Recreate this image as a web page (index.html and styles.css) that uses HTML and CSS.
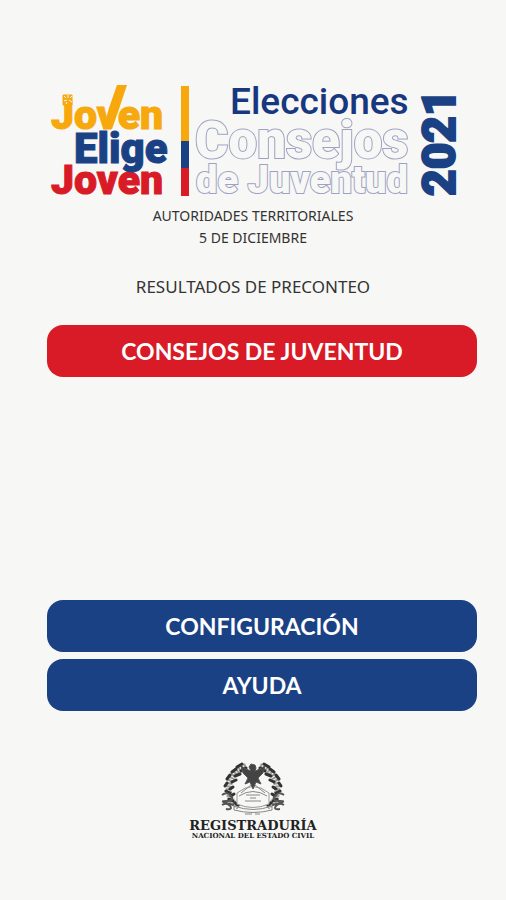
FILE: index.html
```
<!DOCTYPE html>
<html lang="es">
<head>
  <meta charset="UTF-8">
  <meta name="viewport" content="width=device-width, initial-scale=1.0">
  <title>Consejos de Juventud 2021</title>
  <link rel="stylesheet" href="styles.css">
</head>
<body>
  <header class="header">
    <svg class="logo" viewBox="0 0 408 114" role="img" aria-label="Joven Elige Joven, Elecciones Consejos de Juventud 2021">
      <!-- Slogan -->
      <g class="slogan">
        <text class="yellow" x="2" y="45">Joven</text>
        <path class="check" d="M54 45L60 24L68 1H78L69 28L63 45Z"/>
        <path class="yellow" d="M14 11h9v10h-9z"/>
        <path class="sparkle" d="M15 12l2 2M19 11v3M23 12l-2 2M15 17l3-1M20 16l3 2M18 18l-1 2"/>
        <text class="red" x="2" y="110">Joven</text>
        <text class="blue large" x="25" y="79">Elige</text>
      </g>
      <!-- Flag bar -->
      <rect class="yellow" x="132" y="2" width="8" height="55"/>
      <rect class="blue" x="132" y="57" width="8" height="27"/>
      <rect class="red" x="132" y="84" width="8" height="28"/>
      <!-- Event name -->
      <text class="outline small" x="147" y="109">de Juventud</text>
      <text class="outline" x="146" y="74">Consejos</text>
      <text class="event" x="181" y="30">Elecciones</text>
      <text class="year" transform="translate(406 112) rotate(-90)">2021</text>
    </svg>
    <p class="subtitle">AUTORIDADES TERRITORIALES</p>
    <p class="subtitle">5 DE DICIEMBRE</p>
    <h1 class="title">RESULTADOS DE PRECONTEO</h1>
  </header>

  <main class="menu">
    <button type="button" class="btn btn-red">CONSEJOS DE JUVENTUD</button>
    <div class="options">
      <button type="button" class="btn">CONFIGURACIÓN</button>
      <button type="button" class="btn">AYUDA</button>
    </div>
  </main>

  <footer class="footer">
    <svg class="emblem" viewBox="0 0 66 54" aria-hidden="true">
      <g class="wreath">
        <path d="M26 4C13 8 8 20 9 30s5 11 10 15"/>
        <path d="M40 4c13 4 18 16 17 26s-5 11-10 15"/>
      </g>
      <g class="leaves">
        <path d="M22 2l-5 3M26 6l-5 3M16 7l-4 3M20 12l-5 2M10 13l-3 4M16 18l-4 2M7 21l-2 3M13 25l-3 2M6 29l4 2M14 32l-3 2M9 37l4 2M15 41l3 2"/>
        <path d="M44 2l5 3M40 6l5 3M50 7l4 3M46 12l5 2M56 13l3 4M50 18l4 2M59 21l2 3M53 25l3 2M60 29l-4 2M52 32l3 2M57 37l-4 2M51 41l-3 2"/>
      </g>
      <path class="ribbon" d="M2 33q5-4 9 1t-5 5 8 4M64 33q-5-4-9 1t5 5-8 4M2 43q5-3 8 1t-4 3M64 43q-5-3-8 1t4 3"/>
      <path class="shield" d="M17 31q16-13 32 0v11q-16 7-32 0z"/>
      <path class="thin" d="M19 34q14-9 28 0M26 33h14M30 36h6M25 39h16M14 44q19 7 38 0v4q-19 5-38 0zM25 52h7M35 52h5"/>
      <path class="bird" d="M31 2l4 1 1 3-1 3 5-2 5-3-2 7-5 5 3 6-5-2-3 7-3-7-5 2 3-6-5-5-2-7 5 3 5 2-2-4z"/>
      <path class="thin" d="M31 23l-10 8M35 23l10 8"/>
    </svg>
    <p class="agency">REGISTRADURÍA</p>
    <p class="agency-sub">NACIONAL DEL ESTADO CIVIL</p>
  </footer>
</body>
</html>
```
FILE: styles.css
```
* {
  box-sizing: border-box;
}
body {
  display: flex;
  flex-direction: column;
  min-height: 100vh;
  margin: 0;
  background-color: #f7f7f5;
  color: #333;
  font-family: "Noto Sans", sans-serif;
}
p, h1 {
  margin: 0;
}
.header {
  display: flex;
  flex-direction: column;
  align-items: center;
  padding-top: 84px;
  text-align: center;
}
.logo {
  width: 408px;
  max-width: 100%;
  margin-bottom: 7px;
  overflow: visible;
  font-family: Roboto, sans-serif;
}
.slogan {
  font-size: 41px;
  font-weight: 900;
}
.slogan text {
  stroke-width: 1px;
}
.large {
  font-size: 42px;
}
.yellow {
  fill: #f7a80d;
}
.blue {
  fill: #1b4185;
}
.red {
  fill: #d81b26;
}
.slogan .yellow {
  stroke: #f7a80d;
}
.slogan .blue {
  stroke: #1b4185;
}
.slogan .red {
  stroke: #d81b26;
}
.check {
  fill: #f7a80d;
}
.sparkle {
  fill: none;
  stroke: #f7f7f5;
}
.outline {
  fill: #f7f7f5;
  stroke: #9da2c2;
  stroke-width: 2px;
  paint-order: stroke;
  font-size: 51px;
  font-weight: 900;
}
.small {
  font-size: 38px;
}
.event {
  fill: #17377f;
  font-size: 37px;
  font-weight: 500;
}
.year {
  fill: #1b4185;
  stroke: #1b4185;
  stroke-width: 2px;
  font-size: 46px;
  font-weight: 900;
}
.subtitle {
  font-size: 14px;
  line-height: 22px;
}
.title {
  margin-top: 26px;
  font-size: 17px;
  font-weight: 400;
  line-height: 24px;
}
.menu {
  display: flex;
  flex: 1;
  flex-direction: column;
  justify-content: space-between;
  padding: 26px 29px 0 47px;
}
.options {
  display: flex;
  flex-direction: column;
  gap: 7px;
}
.btn {
  width: 100%;
  height: 52px;
  border: none;
  border-radius: 16px;
  background-color: #1b4185;
  color: white;
  font-family: Lato, sans-serif;
  font-size: 23px;
  font-weight: 700;
  cursor: pointer;
}
.btn-red {
  background-color: #d81b26;
}
.footer {
  display: flex;
  flex-direction: column;
  align-items: center;
  padding: 51px 0 60px;
  color: #222;
  font-family: "DejaVu Serif", serif;
  font-weight: bold;
}
.emblem {
  width: 66px;
  margin-bottom: 3px;
}
.emblem path {
  fill: none;
  stroke: #555;
}
.emblem .wreath path {
  stroke: #999;
  stroke-width: 6px;
  stroke-dasharray: 2 1;
}
.emblem .leaves path {
  stroke: #333;
  stroke-width: 3px;
  stroke-linecap: round;
}
.emblem .ribbon {
  stroke-width: 2px;
}
.emblem .shield {
  fill: #f7f7f5;
  stroke: #999;
}
.emblem .thin {
  stroke: #888;
}
.emblem .bird {
  fill: #444;
}
.agency {
  font-size: 13px;
  line-height: 13px;
}
.agency-sub {
  font-size: 7px;
  line-height: 8px;
}
```
